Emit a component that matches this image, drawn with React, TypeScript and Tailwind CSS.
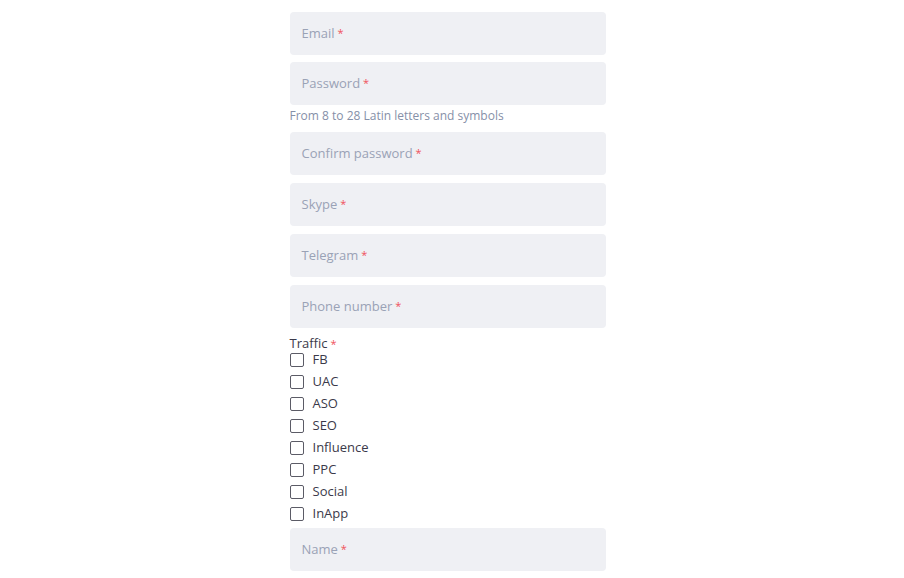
const fields = ["Email", "Password"];
const fields2 = ["Confirm password", "Skype", "Telegram", "Phone number"];
const traffic = ["FB", "UAC", "ASO", "SEO", "Influence", "PPC", "Social", "InApp"];

const Field = ({ label }: { label: string }) => (
  <div className="flex h-[43px] w-full items-center rounded-[4px] bg-[#eff0f4] px-[12px] text-[13px] text-[#9aa2b6]">
    {label}
    <span className="ml-[3px] self-start pt-[13px] text-[11px] text-[#f0525c]">*</span>
  </div>
);

const App = () => {
  return (
    <div
      className="flex min-h-[578px] w-full justify-center bg-white pt-[12px]"
      style={{ fontFamily: '"Open Sans", "Liberation Sans", sans-serif' }}
    >
      <div className="ml-[-9px] flex w-[316px] flex-col">
        <div className="flex flex-col gap-[7px]">
          {fields.map((f) => (
            <Field key={f} label={f} />
          ))}
        </div>
        <p className="mt-[2px] text-[12px] leading-[18px] text-[#8690a8]">
          From 8 to 28 Latin letters and symbols
        </p>
        <div className="mt-[7px] flex flex-col gap-[8px]">
          {fields2.map((f) => (
            <Field key={f} label={f} />
          ))}
        </div>
        <div className="mt-[7px] text-[13px] leading-[16px] text-[#3b3a4a]">
          Traffic<span className="ml-[3px] text-[11px] text-[#f0525c]">*</span>
        </div>
        <div className="mt-[-3px] flex flex-col">
          {traffic.map((t) => (
            <label key={t} className="flex h-[22px] items-center gap-[9px] text-[13px] text-[#3b3a4a]">
              <span className="h-[14px] w-[14px] rounded-[2px] border border-[#5b5b66] bg-white" />
              {t}
            </label>
          ))}
        </div>
        <div className="mt-[3px]">
          <Field label="Name" />
        </div>
      </div>
    </div>
  );
};

export default App;
